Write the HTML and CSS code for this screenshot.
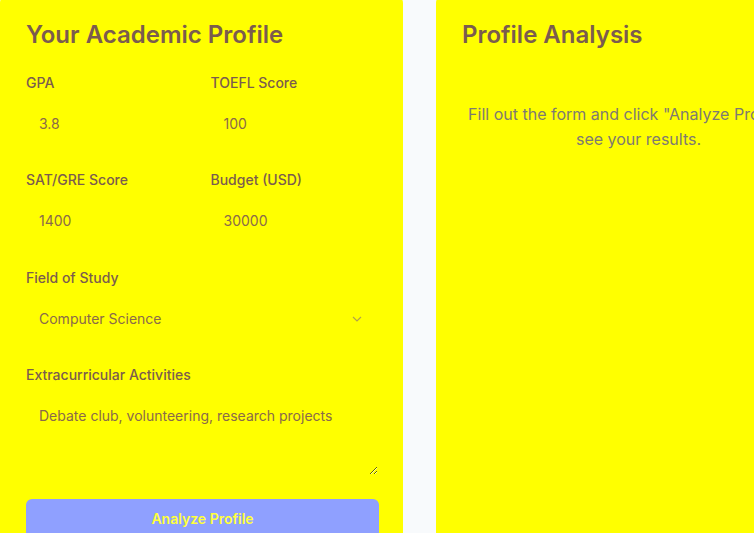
FILE: index.html
```html
<!DOCTYPE html>
<html>
<head>
<meta charset="utf-8">
<link rel="stylesheet" href="styles.css">
</head>
<body>
<div class="layout">
  <section class="card">
    <h2 class="card-title">Your Academic Profile</h2>
    <div class="grid">
      <div class="field">
        <label class="label">GPA</label>
        <input class="input" value="3.8">
      </div>
      <div class="field">
        <label class="label">TOEFL Score</label>
        <input class="input" value="100">
      </div>
      <div class="field">
        <label class="label">SAT/GRE Score</label>
        <input class="input" value="1400">
      </div>
      <div class="field">
        <label class="label">Budget (USD)</label>
        <input class="input" value="30000">
      </div>
    </div>
    <div class="field">
      <label class="label">Field of Study</label>
      <div class="select">
        <span>Computer Science</span>
        <svg class="chev" width="10" height="6" viewBox="0 0 10 6"><path d="M1 1l4 4 4-4" fill="none" stroke="#b3a24a" stroke-width="1.2"/></svg>
      </div>
    </div>
    <div class="field">
      <label class="label">Extracurricular Activities</label>
      <textarea class="textarea">Debate club, volunteering, research projects</textarea>
    </div>
    <button class="button">Analyze Profile</button>
  </section>
  <section class="card">
    <h2 class="card-title">Profile Analysis</h2>
    <p class="empty">Fill out the form and click "Analyze Profile" to see your results.</p>
  </section>
</div>
</body>
</html>
```

FILE: styles.css
```css
html, body {
  margin: 0;
  padding: 0;
  background: #f8fafc;
  overflow: hidden;
}
body {
  font-family: Inter, "Noto Sans", sans-serif;
  color: #7b5c4e;
}
.layout {
  display: flex;
  gap: 33px;
  margin-top: -5px;
}
.card {
  flex: 0 0 auto;
  width: 403px;
  min-width: 0;
  box-sizing: border-box;
  background: #ffff00;
  border-radius: 8px;
  padding: 24px 24px 24px 26px;
  min-height: 560px;
}
.card-title {
  margin: 0 0 22px;
  font-size: 24px;
  line-height: 32px;
  font-weight: 600;
  color: #7b5c4e;
}
.grid {
  display: grid;
  grid-template-columns: minmax(0, 1fr) minmax(0, 1fr);
  column-gap: 16px;
  margin-bottom: 1px;
}
.field {
  display: flex;
  flex-direction: column;
  margin-bottom: 23px;
  min-width: 0;
}
.label {
  font-size: 14px;
  line-height: 20px;
  font-weight: 500;
  margin-bottom: 8px;
  color: #7b5c4e;
}
.input, .textarea, .select {
  font-family: Inter, "Noto Sans", sans-serif;
  font-size: 14px;
  line-height: 20px;
  color: #8a6a4a;
  background: transparent;
  border: 1px solid transparent;
  border-radius: 6px;
  padding: 12px;
  margin: 0;
  outline: none;
  width: 100%;
  min-width: 0;
  box-sizing: border-box;
}
.select {
  display: flex;
  align-items: center;
  justify-content: space-between;
}
.chev {
  margin-right: 4px;
}
.textarea {
  height: 83px;
  resize: vertical;
}
.button {
  display: block;
  width: 100%;
  border: none;
  border-radius: 6px;
  background: #8fa0ff;
  color: #ffff3a;
  font-family: Inter, "Noto Sans", sans-serif;
  font-size: 14px;
  font-weight: 600;
  line-height: 20px;
  padding: 10px 16px 14px;
  margin-top: 3px;
}
.empty {
  margin: 51px 0 0;
  text-align: center;
  font-size: 16px;
  line-height: 25px;
  color: #7e7a72;
  padding: 0 4px;
}
```
